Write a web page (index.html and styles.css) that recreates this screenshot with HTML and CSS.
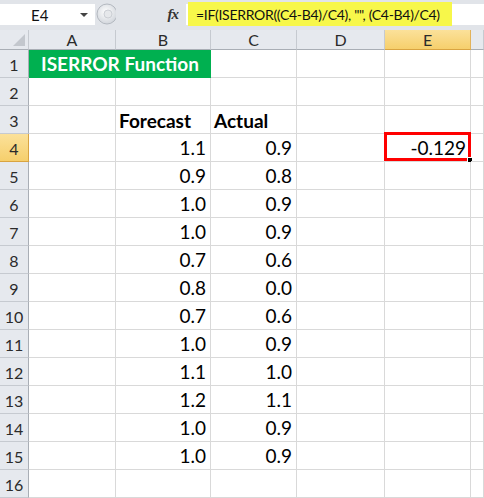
FILE: index.html
```html
<!DOCTYPE html>
<html>
<head>
<meta charset="utf-8">
<link rel="stylesheet" href="styles.css">
</head>
<body>
<div class="fbar">
  <div class="namebox"><span class="ref">E4</span><span class="dd"></span></div>
  <svg class="handle" width="20" height="24" viewBox="0 0 20 24">
    <defs>
      <radialGradient id="hg" cx="0.45" cy="0.4" r="0.6">
        <stop offset="0" stop-color="#ffffff"/>
        <stop offset="1" stop-color="#d2d6dc"/>
      </radialGradient>
    </defs>
    <circle cx="11" cy="12" r="10" fill="url(#hg)" stroke="#b4b9c0" stroke-width="1"/>
    <circle cx="12" cy="12" r="4" fill="#e6e8eb" stroke="#c4c8ce" stroke-width="0.8"/>
  </svg>
  <div class="fxzone"><span class="fx">fx</span></div>
  <div class="finput"><span class="formula">=IF(ISERROR((C4-B4)/C4), "", (C4-B4)/C4)</span></div>
</div>
<div class="sheet">
  <div class="corner"><span class="tri"></span></div>
  <div class="ch">A</div><div class="ch">B</div><div class="ch">C</div><div class="ch">D</div><div class="ch sel">E</div><div class="ch"></div>

  <div class="rh">1</div><div class="c title">ISERROR Function</div><div class="c"></div><div class="c"></div><div class="c"></div><div class="c"></div>
  <div class="rh">2</div><div class="c"></div><div class="c"></div><div class="c"></div><div class="c"></div><div class="c"></div><div class="c"></div>
  <div class="rh">3</div><div class="c"></div><div class="c lbl">Forecast</div><div class="c lbl">Actual</div><div class="c"></div><div class="c"></div><div class="c"></div>
  <div class="rh sel">4</div><div class="c"></div><div class="c n">1.1</div><div class="c n">0.9</div><div class="c"></div><div class="c n active">-0.129<span class="redbox"></span><span class="fill"></span></div><div class="c"></div>
  <div class="rh">5</div><div class="c"></div><div class="c n">0.9</div><div class="c n">0.8</div><div class="c"></div><div class="c"></div><div class="c"></div>
  <div class="rh">6</div><div class="c"></div><div class="c n">1.0</div><div class="c n">0.9</div><div class="c"></div><div class="c"></div><div class="c"></div>
  <div class="rh">7</div><div class="c"></div><div class="c n">1.0</div><div class="c n">0.9</div><div class="c"></div><div class="c"></div><div class="c"></div>
  <div class="rh">8</div><div class="c"></div><div class="c n">0.7</div><div class="c n">0.6</div><div class="c"></div><div class="c"></div><div class="c"></div>
  <div class="rh">9</div><div class="c"></div><div class="c n">0.8</div><div class="c n">0.0</div><div class="c"></div><div class="c"></div><div class="c"></div>
  <div class="rh">10</div><div class="c"></div><div class="c n">0.7</div><div class="c n">0.6</div><div class="c"></div><div class="c"></div><div class="c"></div>
  <div class="rh">11</div><div class="c"></div><div class="c n">1.0</div><div class="c n">0.9</div><div class="c"></div><div class="c"></div><div class="c"></div>
  <div class="rh">12</div><div class="c"></div><div class="c n">1.1</div><div class="c n">1.0</div><div class="c"></div><div class="c"></div><div class="c"></div>
  <div class="rh">13</div><div class="c"></div><div class="c n">1.2</div><div class="c n">1.1</div><div class="c"></div><div class="c"></div><div class="c"></div>
  <div class="rh">14</div><div class="c"></div><div class="c n">1.0</div><div class="c n">0.9</div><div class="c"></div><div class="c"></div><div class="c"></div>
  <div class="rh">15</div><div class="c"></div><div class="c n">1.0</div><div class="c n">0.9</div><div class="c"></div><div class="c"></div><div class="c"></div>
  <div class="rh">16</div><div class="c"></div><div class="c"></div><div class="c"></div><div class="c"></div><div class="c"></div><div class="c"></div>
</div>
</body>
</html>
```
FILE: styles.css
```css
html, body {
  margin: 0;
  padding: 0;
  background: #ffffff;
}
body {
  width: 484px;
  height: 498px;
  overflow: hidden;
  font-family: Lato, "Liberation Sans", sans-serif;
  color: #000;
}
.fbar {
  height: 30px;
  box-sizing: border-box;
  padding: 4px 0 5px 0;
  background: #e1e4e9;
  display: flex;
  align-items: stretch;
}
.namebox {
  width: 95px;
  background: #fff;
  display: flex;
  align-items: center;
  position: relative;
}
.ref {
  margin-left: 31px;
  font-size: 15px;
  color: #111;
}
.dd {
  position: absolute;
  left: 80px;
  top: 9px;
  width: 0;
  height: 0;
  border-left: 4px solid transparent;
  border-right: 4px solid transparent;
  border-top: 4px solid #444;
}
.handle {
  margin-top: -2px;
  margin-left: 1px;
}
.fxzone {
  width: 62px;
  display: flex;
  align-items: center;
  justify-content: flex-end;
  padding-right: 8px;
}
.fx {
  font-family: "Liberation Serif", serif;
  font-style: italic;
  font-weight: bold;
  font-size: 15px;
  color: #333;
  letter-spacing: -1px;
}
.finput {
  flex: 1;
  background: #fff;
  display: flex;
  align-items: stretch;
  padding-left: 2px;
}
.formula {
  background: #f7f74a;
  margin: -2px 0 -1px 0;
  width: 264px;
  box-sizing: border-box;
  padding: 0 0 0 8px;
  font-size: 14px;
  letter-spacing: -0.3px;
  display: flex;
  align-items: center;
  color: #111;
  white-space: nowrap;
}
.sheet {
  display: grid;
  grid-template-columns: 29px 87px 95px 86px 88px 86px 13px;
  grid-template-rows: 20px;
  grid-auto-rows: 28px;
}
.corner {
  background: #e6e9ee;
  border-right: 1px solid #c6cad0;
  border-bottom: 1px solid #a9aeb5;
  position: relative;
  box-sizing: border-box;
}
.tri {
  position: absolute;
  right: 3px;
  bottom: 3px;
  width: 0;
  height: 0;
  border-left: 12px solid transparent;
  border-bottom: 12px solid #c3c7cd;
}
.ch {
  background: #e6e9ee;
  border-right: 1px solid #c6cad0;
  border-bottom: 1px solid #a9aeb5;
  box-sizing: border-box;
  font-size: 16px;
  color: #2b2b2b;
  display: flex;
  align-items: center;
  justify-content: center;
  padding-bottom: 1px;
}
.ch.sel {
  background: linear-gradient(#fbe19a, #f6cf6c);
  border-right: 1px solid #e2b25a;
  border-bottom: 1px solid #d9a441;
}
.rh {
  background: #e6e9ee;
  border-right: 1px solid #a9aeb5;
  border-bottom: 1px solid #c6cad0;
  box-sizing: border-box;
  font-size: 16px;
  color: #2b2b2b;
  display: flex;
  align-items: center;
  justify-content: center;
  padding-top: 2px;
}
.rh.sel {
  background: linear-gradient(#fbe19a, #f6cf6c);
  border-bottom: 1px solid #d9a441;
  border-right: 1px solid #d9a441;
}
.c {
  border-right: 1px solid #d9d9d9;
  border-bottom: 1px solid #d9d9d9;
  box-sizing: border-box;
  font-size: 19px;
  display: flex;
  align-items: flex-end;
  padding: 0 4px 2px 3px;
  white-space: nowrap;
  position: relative;
}
.n {
  justify-content: flex-end;
}
.lbl {
  font-weight: bold;
  padding-bottom: 1px;
}
.title {
  grid-column: span 2;
  background: #00b050;
  border-right: none;
  border-bottom-color: #00b050;
  color: #fff;
  font-weight: bold;
  justify-content: center;
  padding-left: 0;
  padding-right: 0;
}
.redbox {
  position: absolute;
  left: -1px;
  top: -2px;
  right: -1px;
  bottom: 0;
  border: 3px solid #ff0000;
}
.fill {
  position: absolute;
  right: -3px;
  bottom: -2px;
  width: 4px;
  height: 4px;
  background: #000;
  border: 1px solid #fff;
}
```
